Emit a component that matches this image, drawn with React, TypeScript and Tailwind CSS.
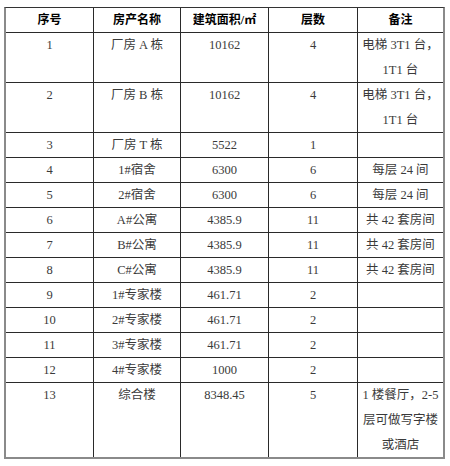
import React from "react";

type Row = { no: string; name: string; area: string; floors: string; note: string[]; lines: number };

const rows: Row[] = [
    { no: "1", name: "厂房 A 栋", area: "10162", floors: "4", note: ["电梯 3T1 台，", "1T1 台"], lines: 2 },
    { no: "2", name: "厂房 B 栋", area: "10162", floors: "4", note: ["电梯 3T1 台，", "1T1 台"], lines: 2 },
    { no: "3", name: "厂房 T 栋", area: "5522", floors: "1", note: [], lines: 1 },
    { no: "4", name: "1#宿舍", area: "6300", floors: "6", note: ["每层 24 间"], lines: 1 },
    { no: "5", name: "2#宿舍", area: "6300", floors: "6", note: ["每层 24 间"], lines: 1 },
    { no: "6", name: "A#公寓", area: "4385.9", floors: "11", note: ["共 42 套房间"], lines: 1 },
    { no: "7", name: "B#公寓", area: "4385.9", floors: "11", note: ["共 42 套房间"], lines: 1 },
    { no: "8", name: "C#公寓", area: "4385.9", floors: "11", note: ["共 42 套房间"], lines: 1 },
    { no: "9", name: "1#专家楼", area: "461.71", floors: "2", note: [], lines: 1 },
    { no: "10", name: "2#专家楼", area: "461.71", floors: "2", note: [], lines: 1 },
    { no: "11", name: "3#专家楼", area: "461.71", floors: "2", note: [], lines: 1 },
    { no: "12", name: "4#专家楼", area: "1000", floors: "2", note: [], lines: 1 },
    { no: "13", name: "综合楼", area: "8348.45", floors: "5", note: ["1 楼餐厅，2-5", "层可做写字楼", "或酒店"], lines: 3 },
];

const heights: Record<number, string> = { 1: "h-[25px]", 2: "h-[50px]", 3: "h-[74px]" };

function Cell({ children, h, last, bottom, bold }: { children?: React.ReactNode; h: string; last?: boolean; bottom: boolean; bold?: boolean }) {
    return (
        <div
            className={`${h} ${last ? "" : "border-r border-[#2a2a2a]"} ${bottom ? "border-b border-[#2a2a2a]" : ""} text-center leading-[25px] overflow-hidden ${bold ? "font-bold text-black text-[12px]" : "text-[#3a3a3a] text-[12.5px]"}`}
        >
            {children}
        </div>
    );
}

export default function App() {
    return (
        <div className="w-[450px] h-[466px] bg-white pt-[7px] pl-[4px]" style={{ fontFamily: '"Liberation Serif", "Noto Sans CJK SC", serif' }}>
            <div className="w-[441px] border-t border-t-[#333] border-l-2 border-r-2 border-b-2 border-l-[#8a8a8a] border-r-[#8a8a8a] border-b-[#8a8a8a] grid grid-cols-[88px_87px_88px_89px_85px]">
                {/* Header */}
                <Cell h="h-[25px]" bottom bold>序号</Cell>
                <Cell h="h-[25px]" bottom bold>房产名称</Cell>
                <Cell h="h-[25px]" bottom bold>建筑面积/㎡</Cell>
                <Cell h="h-[25px]" bottom bold>层数</Cell>
                <Cell h="h-[25px]" bottom bold last>备注</Cell>

                {rows.map((r, i) => {
                    const h = heights[r.lines];
                    const bottom = i < rows.length - 1;
                    return (
                        <React.Fragment key={r.no}>
                            <Cell h={h} bottom={bottom}>{r.no}</Cell>
                            <Cell h={h} bottom={bottom}>{r.name}</Cell>
                            <Cell h={h} bottom={bottom}>{r.area}</Cell>
                            <Cell h={h} bottom={bottom}>{r.floors}</Cell>
                            <Cell h={h} bottom={bottom} last>
                                {r.note.map((n) => (
                                    <div key={n}>{n}</div>
                                ))}
                            </Cell>
                        </React.Fragment>
                    );
                })}
            </div>
        </div>
    );
}
